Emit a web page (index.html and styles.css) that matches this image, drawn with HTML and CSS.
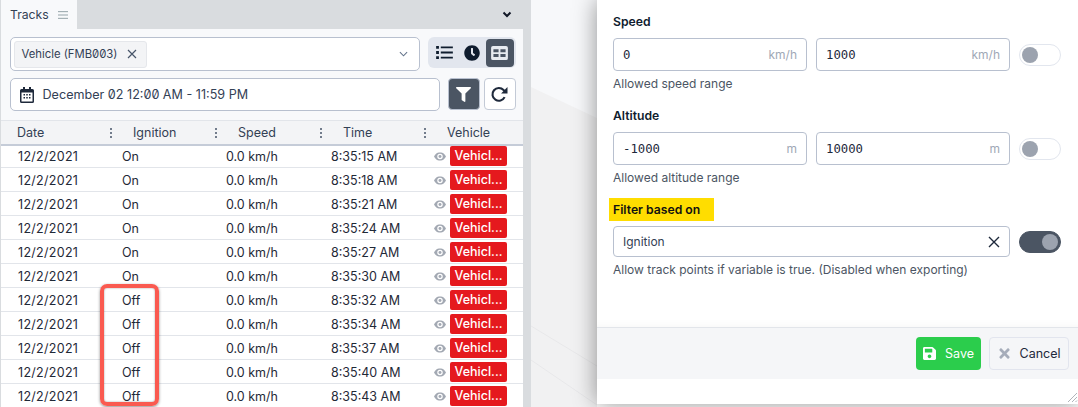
FILE: index.html
```html
<!DOCTYPE html>
<html lang="en">
<head>
    <meta charset="UTF-8">
    <title>Tracks</title>
    <link rel="stylesheet" href="styles.css">
</head>
<body>
    <div class="page">
        <div class="panel">
            <div class="tabbar">
                <div class="tab">
                    <span>Tracks</span>
                    <svg class="tab-menu" viewBox="0 0 12 10"><path d="M0 1h12M0 5h12M0 9h12"/></svg>
                </div>
                <svg class="tab-caret" viewBox="0 0 10 7"><path d="M1.5 1.5L5 5l3.5-3.5"/></svg>
            </div>
            <div class="toolbar">
                <div class="toolbar-row">
                    <div class="select">
                        <div class="chip">Vehicle (FMB003)
                            <svg class="chip-x" viewBox="0 0 10 10"><path d="M1 1l8 8M9 1l-8 8"/></svg>
                        </div>
                        <svg class="select-caret" viewBox="0 0 10 6"><path d="M1 1l4 4 4-4"/></svg>
                    </div>
                    <div class="view-group">
                        <button class="view-btn">
                            <svg class="ico-list" viewBox="0 0 18 14"><path d="M0 0h3v3H0zM0 5.500h3v3H0zM0 11h3v3H0zM5 .5h13v2H5zM5 6h13v2H5zM5 11.500h13v2H5z"/></svg>
                        </button>
                        <button class="view-btn">
                            <svg class="ico-clock" viewBox="0 0 512 512"><path d="M256,8C119,8,8,119,8,256S119,504,256,504,504,393,504,256,393,8,256,8Zm92.49,313h0l-20,25a16,16,0,0,1-22.49,2.5h0l-67-49.72a40,40,0,0,1-15-31.23V112a16,16,0,0,1,16-16h32a16,16,0,0,1,16,16V256l58,42.5A16,16,0,0,1,348.49,321Z"/></svg>
                        </button>
                        <button class="view-btn active">
                            <svg class="ico-table" viewBox="0 0 18 15"><path fill-rule="evenodd" d="M2 0h14a2 2 0 0 1 2 2v11a2 2 0 0 1-2 2H2a2 2 0 0 1-2-2V2a2 2 0 0 1 2-2zM2.500 3.500v3.200h5.500V3.500zM10 3.500v3.200h5.500V3.500zM2.500 8.500v3.200h5.500V8.500zM10 8.500v3.200h5.500V8.500z"/></svg>
                        </button>
                    </div>
                </div>
                <div class="toolbar-row date-row">
                    <div class="date-field">
                        <svg class="ico-cal" viewBox="0 0 14 16"><path fill-rule="evenodd" d="M3 0h2v2h4V0h2v2h1.500A1.500 1.500 0 0 1 14 3.500v11a1.500 1.500 0 0 1-1.500 1.500h-11A1.500 1.500 0 0 1 0 14.500v-11A1.500 1.500 0 0 1 1.500 2H3zM1.500 5.500v9h11v-9zM3.500 7h1.500v1.500H3.500zM6.250 7h1.500v1.500h-1.500zM9 7h1.500v1.500H9zM3.500 10h1.500v1.500H3.500zM6.250 10h1.500v1.500h-1.500zM9 10h1.500v1.500H9z"/></svg>
                        <span>December 02 12:00 AM - 11:59 PM</span>
                    </div>
                    <button class="filter-btn">
                        <svg viewBox="0 0 512 512"><path d="M487.976 0H24.028C2.71 0-8.047 25.866 7.058 40.971L192 225.941V432c0 7.831 3.821 15.17 10.237 19.662l80 55.98C298.02 518.69 320 507.493 320 487.98V225.941l184.947-184.97C520.021 25.896 509.338 0 487.976 0z"/></svg>
                    </button>
                    <button class="refresh-btn">
                        <svg viewBox="0 0 16 16"><path class="refresh-arc" d="M12.800 10.500A6 6 0 1 1 11.800 3.800L14 5.500"/><path d="M15.500 1v6h-6z"/></svg>
                    </button>
                </div>
            </div>
            <div class="table">
                <div class="thead">
                    <div class="th">Date<i class="kebab"></i></div>
                    <div class="th">Ignition<i class="kebab"></i></div>
                    <div class="th">Speed<i class="kebab"></i></div>
                    <div class="th">Time<i class="kebab"></i></div>
                    <div class="th">Vehicle</div>
                </div>
                <div class="tr"><span>12/2/2021</span><span>On</span><span>0.0 km/h</span><span>8:35:15 AM</span><span class="vehicle"><svg class="eye" viewBox="0 0 14 10"><use href="#eye"/></svg><b class="badge">Vehicl...</b></span></div>
                <div class="tr"><span>12/2/2021</span><span>On</span><span>0.0 km/h</span><span>8:35:18 AM</span><span class="vehicle"><svg class="eye" viewBox="0 0 14 10"><use href="#eye"/></svg><b class="badge">Vehicl...</b></span></div>
                <div class="tr"><span>12/2/2021</span><span>On</span><span>0.0 km/h</span><span>8:35:21 AM</span><span class="vehicle"><svg class="eye" viewBox="0 0 14 10"><use href="#eye"/></svg><b class="badge">Vehicl...</b></span></div>
                <div class="tr"><span>12/2/2021</span><span>On</span><span>0.0 km/h</span><span>8:35:24 AM</span><span class="vehicle"><svg class="eye" viewBox="0 0 14 10"><use href="#eye"/></svg><b class="badge">Vehicl...</b></span></div>
                <div class="tr"><span>12/2/2021</span><span>On</span><span>0.0 km/h</span><span>8:35:27 AM</span><span class="vehicle"><svg class="eye" viewBox="0 0 14 10"><use href="#eye"/></svg><b class="badge">Vehicl...</b></span></div>
                <div class="tr"><span>12/2/2021</span><span>On</span><span>0.0 km/h</span><span>8:35:30 AM</span><span class="vehicle"><svg class="eye" viewBox="0 0 14 10"><use href="#eye"/></svg><b class="badge">Vehicl...</b></span></div>
                <div class="tr"><span>12/2/2021</span><span>Off</span><span>0.0 km/h</span><span>8:35:32 AM</span><span class="vehicle"><svg class="eye" viewBox="0 0 14 10"><use href="#eye"/></svg><b class="badge">Vehicl...</b></span></div>
                <div class="tr"><span>12/2/2021</span><span>Off</span><span>0.0 km/h</span><span>8:35:34 AM</span><span class="vehicle"><svg class="eye" viewBox="0 0 14 10"><use href="#eye"/></svg><b class="badge">Vehicl...</b></span></div>
                <div class="tr"><span>12/2/2021</span><span>Off</span><span>0.0 km/h</span><span>8:35:37 AM</span><span class="vehicle"><svg class="eye" viewBox="0 0 14 10"><use href="#eye"/></svg><b class="badge">Vehicl...</b></span></div>
                <div class="tr"><span>12/2/2021</span><span>Off</span><span>0.0 km/h</span><span>8:35:40 AM</span><span class="vehicle"><svg class="eye" viewBox="0 0 14 10"><use href="#eye"/></svg><b class="badge">Vehicl...</b></span></div>
                <div class="tr"><span>12/2/2021</span><span>Off</span><span>0.0 km/h</span><span>8:35:43 AM</span><span class="vehicle"><svg class="eye" viewBox="0 0 14 10"><use href="#eye"/></svg><b class="badge">Vehicl...</b></span></div>
            </div>
            <!-- annotation over the Off rows -->
            <div class="callout"></div>
        </div>

        <div class="backdrop">
            <svg class="backdrop-art" viewBox="0 0 66 407" preserveAspectRatio="none">
                <path d="M0 87L66 118V407H0z" fill="#f1f1f2"/>
                <path d="M0 326L66 366M0 360L66 405" stroke="#e8e8ea" fill="none"/>
            </svg>
        </div>

        <div class="modal">
            <div class="modal-body">
                <div class="field">
                    <label class="field-label">Speed</label>
                    <div class="field-row">
                        <div class="input"><span class="value">0</span><span class="unit">km/h</span></div>
                        <div class="input"><span class="value">1000</span><span class="unit">km/h</span></div>
                        <div class="toggle"></div>
                    </div>
                    <div class="help">Allowed speed range</div>
                </div>
                <div class="field">
                    <label class="field-label">Altitude</label>
                    <div class="field-row">
                        <div class="input"><span class="value">-1000</span><span class="unit">m</span></div>
                        <div class="input"><span class="value">10000</span><span class="unit">m</span></div>
                        <div class="toggle"></div>
                    </div>
                    <div class="help">Allowed altitude range</div>
                </div>
                <div class="field">
                    <label class="field-label"><span class="marked">Filter based on</span></label>
                    <div class="field-row">
                        <div class="input input-wide">
                            <span>Ignition</span>
                            <svg class="clear-x" viewBox="0 0 12 12"><path d="M1 1l10 10M11 1L1 11"/></svg>
                        </div>
                        <div class="toggle on"></div>
                    </div>
                    <div class="help">Allow track points if variable is true. (Disabled when exporting)</div>
                </div>
            </div>
            <div class="modal-footer">
                <button class="btn btn-save">
                    <svg viewBox="0 0 448 512"><path d="M433.941 129.941l-83.882-83.882A48 48 0 0 0 316.118 32H48C21.49 32 0 53.49 0 80v352c0 26.51 21.49 48 48 48h352c26.51 0 48-21.49 48-48V163.882a48 48 0 0 0-14.059-33.941zM224 416c-35.346 0-64-28.654-64-64 0-35.346 28.654-64 64-64s64 28.654 64 64c0 35.346-28.654 64-64 64zm96-304.52V212c0 6.627-5.373 12-12 12H76c-6.627 0-12-5.373-12-12V108c0-6.627 5.373-12 12-12h228.52c3.183 0 6.235 1.264 8.485 3.515l3.48 3.48A11.996 11.996 0 0 1 320 111.48z"/></svg>
                    Save
                </button>
                <button class="btn btn-cancel">
                    <svg viewBox="0 0 352 512"><path d="M242.72 256l100.07-100.07c12.28-12.28 12.28-32.19 0-44.48l-22.24-22.24c-12.28-12.28-32.19-12.28-44.48 0L176 189.28 75.93 89.21c-12.28-12.28-32.19-12.28-44.48 0L9.21 111.45c-12.28 12.28-12.28 32.19 0 44.48L109.28 256 9.21 356.07c-12.28 12.28-12.28 32.19 0 44.48l22.24 22.24c12.28 12.28 32.2 12.28 44.48 0L176 322.72l100.07 100.07c12.28 12.28 32.2 12.28 44.48 0l22.24-22.24c12.28-12.28 12.28-32.19 0-44.48L242.72 256z"/></svg>
                    Cancel
                </button>
            </div>
            <svg class="grip" viewBox="0 0 12 12"><path d="M11 2L2 11M11 6l-5 5M11 9.500L9.500 11"/></svg>
            <div class="edge-mark"></div>
        </div>
    </div>

    <svg class="defs" width="0" height="0">
        <symbol id="eye" viewBox="0 0 14 10">
            <path fill-rule="evenodd" d="M7 0c3.300 0 5.800 2.400 7 5-1.200 2.600-3.700 5-7 5S1.200 7.600 0 5c1.200-2.600 3.700-5 7-5zm0 1.800a3.200 3.200 0 1 0 0 6.400 3.200 3.200 0 0 0 0-6.400z"/>
            <circle cx="7" cy="5" r="1.700"/>
        </symbol>
    </svg>
</body>
</html>
```

FILE: styles.css
```css
* {
    box-sizing: border-box;
}

html, body {
    margin: 0;
    height: 100%;
    overflow: hidden;
}

body {
    font-family: 'Inter', sans-serif;
    font-size: 12.5px;
    color: #1e293b;
    background: #fff;
}

button {
    font-family: inherit;
    padding: 0;
    cursor: pointer;
}

.defs {
    position: absolute;
}

.page {
    display: flex;
    height: 407px;
    width: 1078px;
}

/* left panel */
.panel {
    position: relative;
    flex: 0 0 531px;
    background: #d9dcdf;
    overflow: hidden;
}

.tabbar {
    display: flex;
    justify-content: space-between;
    align-items: center;
    height: 29px;
    padding: 0 19px 0 1px;
}

.tab {
    display: flex;
    align-items: center;
    gap: 9px;
    width: 76px;
    height: 29px;
    padding-left: 9px;
    font-size: 12.2px;
    color: #334155;
    background: #f8f9fb;
}

.tab-menu {
    width: 10px;
    height: 10px;
    fill: none;
    stroke: #94a3a8;
    stroke-width: 1.2;
}

.tab-caret {
    width: 10px;
    height: 7px;
    fill: none;
    stroke: #111827;
    stroke-width: 2;
}

.toolbar {
    height: 91px;
    margin: 0 8px 0 1px;
    padding: 8px 0 0 8.5px;
    background: #f8f9fb;
}

.toolbar-row {
    display: flex;
    align-items: flex-start;
}

.date-row {
    margin-top: 7px;
}

.select {
    display: flex;
    justify-content: space-between;
    align-items: center;
    width: 410px;
    height: 34px;
    padding: 0 11px 0 3px;
    background: #fff;
    border: 1px solid #b8c0cf;
    border-radius: 5px;
}

.chip {
    display: flex;
    align-items: center;
    gap: 10px;
    height: 27px;
    width: 133px;
    padding-left: 7px;
    font-size: 11.3px;
    white-space: nowrap;
    font-feature-settings: "zero";
    color: #334155;
    background: #f3f4f6;
    border: 1px solid #e5e7eb;
    border-radius: 3px;
}

.chip-x {
    flex: none;
    width: 10px;
    height: 10px;
    fill: none;
    stroke: #475569;
    stroke-width: 1.2;
}

.select-caret {
    width: 9px;
    height: 6px;
    fill: none;
    stroke: #64748b;
    stroke-width: 1.2;
}

.view-group {
    display: flex;
    align-items: center;
    justify-content: space-between;
    width: 88px;
    height: 31px;
    margin-left: 8px;
    padding: 0 2px 0 3px;
    background: #e2e6ee;
    border-radius: 6px;
}

.view-btn {
    display: flex;
    align-items: center;
    justify-content: center;
    width: 28px;
    height: 28px;
    background: none;
    border: none;
    border-radius: 4px;
    fill: #0f1c2e;
}

.view-btn.active {
    background: #4b5563;
    fill: #e8ebf0;
}

.ico-list {
    width: 17px;
    height: 13px;
}

.ico-clock {
    width: 16px;
    height: 16px;
}

.ico-table {
    width: 17px;
    height: 14px;
}

.date-field {
    display: flex;
    align-items: center;
    gap: 9px;
    width: 430px;
    height: 33px;
    padding-left: 9px;
    font-size: 12.6px;
    font-feature-settings: "zero";
    color: #334155;
    background: #fff;
    border: 1px solid #b8c0cf;
    border-radius: 5px;
}

.ico-cal {
    width: 14px;
    height: 16px;
    fill: #1e293b;
}

.filter-btn {
    display: flex;
    align-items: center;
    justify-content: center;
    width: 32px;
    height: 32px;
    margin-left: 8px;
    background: #4b5563;
    border: 1px solid #b8c0cf;
    border-radius: 4px;
    fill: #fff;
}

.filter-btn svg {
    width: 15px;
    height: 15px;
}

.refresh-btn {
    display: flex;
    align-items: center;
    justify-content: center;
    width: 32px;
    height: 32px;
    margin-left: 4px;
    background: #fff;
    border: 1px solid #c3cad6;
    border-radius: 4px;
    fill: #1e293b;
}

.refresh-btn svg {
    width: 17px;
    height: 17px;
}

.refresh-arc {
    fill: none;
    stroke: #1e293b;
    stroke-width: 2;
}

/* table */
.table {
    width: 522px;
    margin-left: 1px;
    font-size: 12.5px;
}

.thead {
    position: relative;
    display: grid;
    grid-template-columns: 121px 105px 105px 104px 1fr;
    height: 26px;
    margin-bottom: -2px;
    background: #f3f4f6;
    border-top: 1px solid #e2e5ea;
    border-bottom: 2px solid #c5ccd8;
}

.th {
    display: flex;
    justify-content: space-between;
    align-items: center;
    padding: 0 10px 0 11px;
    color: #334155;
}

.th:first-child {
    padding-left: 16px;
}

.kebab {
    width: 2px;
    height: 2px;
    background: #475569;
    border-radius: 50%;
    box-shadow: 0 -4px 0 #475569, 0 4px 0 #475569;
}

.tr {
    display: grid;
    grid-template-columns: 121px 104px 105px 103px 1fr;
    align-items: center;
    height: 24px;
    padding-top: 1px;
    background: #fff;
    color: #1f2937;
    border-bottom: 1px solid #e2e5ea;
}

.tr > span:first-child {
    padding-left: 17px;
    letter-spacing: 0.3px;
}

.vehicle {
    display: flex;
    align-items: center;
    gap: 4px;
}

.eye {
    width: 12px;
    height: 9px;
    fill: #a3a9b3;
}

.badge {
    width: 57px;
    height: 20px;
    line-height: 19px;
    text-align: center;
    font-weight: 500;
    color: #fff;
    background: #e5191e;
    border-radius: 2px;
}

.callout {
    position: absolute;
    left: 100px;
    top: 284px;
    width: 59px;
    height: 122px;
    border: 4px solid #fa5a50;
    border-radius: 7px;
    box-shadow: 0 1px 3px rgba(0, 0, 0, 0.45), inset 0 0 2px rgba(0, 0, 0, 0.4);
}

/* backdrop */
.backdrop {
    position: relative;
    flex: 0 0 66px;
    background: #f7f8fa;
}

.backdrop-art {
    position: absolute;
    inset: 0;
    width: 100%;
    height: 100%;
}

/* modal */
.modal {
    position: relative;
    display: flex;
    flex-direction: column;
    flex: 0 0 481px;
    height: 404px;
    background: #fff;
    border-right: 1px solid #d9dcdf;
    box-shadow: 0 0 22px rgba(0, 0, 0, 0.42);
}

.modal-body {
    height: 328px;
    padding: 14px 17px 0 16px;
    border-bottom: 1px solid #e2e5ea;
    box-shadow: inset 0 -12px 10px -12px rgba(0, 0, 0, 0.05);
}

.field {
    margin-bottom: 16px;
}

.field-label {
    display: block;
    height: 16px;
    margin-bottom: 8px;
    line-height: 16px;
    font-size: 12.2px;
    font-weight: 600;
    color: #0f1c2e;
}

.marked {
    display: inline-block;
    margin: -4px 0 0 -4px;
    padding: 4px 14px 3px 4px;
    color: #111;
    background: #ffdd00;
}

.field-row {
    display: flex;
    align-items: center;
    gap: 9px;
}

.input {
    display: flex;
    justify-content: space-between;
    align-items: center;
    width: 194px;
    height: 33px;
    padding: 0 9px;
    background: #fff;
    border: 1px solid #b8c0cf;
    border-radius: 4px;
}

.input-wide {
    width: 397px;
    height: 31px;
    font-size: 12px;
    color: #334155;
}

.value {
    font-family: 'DejaVu Sans Mono', monospace;
    font-size: 12.3px;
    color: #1e293b;
}

.unit {
    font-size: 12px;
    color: #a0a8b6;
}

.clear-x {
    width: 12px;
    height: 12px;
    fill: none;
    stroke: #1e293b;
    stroke-width: 1.4;
}

.toggle {
    display: flex;
    align-items: center;
    width: 42px;
    height: 22px;
    padding: 0 2px;
    background: #fff;
    border: 1px solid #e2e6ee;
    border-radius: 11px;
}

.toggle::after {
    content: "";
    width: 16px;
    height: 16px;
    background: #9ca3af;
    border-radius: 50%;
}

.toggle.on {
    justify-content: flex-end;
    background: #4b5563;
    border-color: #4b5563;
}

.help {
    height: 16px;
    margin-top: 5px;
    line-height: 16px;
    font-size: 12px;
    color: #4b5563;
}

.modal-footer {
    display: flex;
    justify-content: flex-end;
    align-items: center;
    gap: 8px;
    height: 51px;
    padding-right: 9px;
    background: #f5f6f8;
}

.btn {
    display: flex;
    align-items: center;
    justify-content: center;
    gap: 9px;
    height: 33px;
    font-size: 12.5px;
    border-radius: 4px;
}

.btn svg {
    width: 13px;
    height: 15px;
}

.btn-save {
    width: 65px;
    color: #fff;
    fill: #fff;
    background: #2bcd4c;
    border: none;
}

.btn-cancel {
    width: 80px;
    color: #1e293b;
    fill: #a6adba;
    background: #f5f6f8;
    border: 1px solid #e2e5ee;
}

.grip {
    position: absolute;
    right: 0;
    bottom: 1px;
    width: 12px;
    height: 12px;
    fill: none;
    stroke: #b0b4ba;
}

.edge-mark {
    position: absolute;
    top: 88px;
    right: -1px;
    width: 1px;
    height: 24px;
    background: linear-gradient(#16233a 33%, #d9622b 33%, #d9622b 75%, #16233a 75%);
}
```
